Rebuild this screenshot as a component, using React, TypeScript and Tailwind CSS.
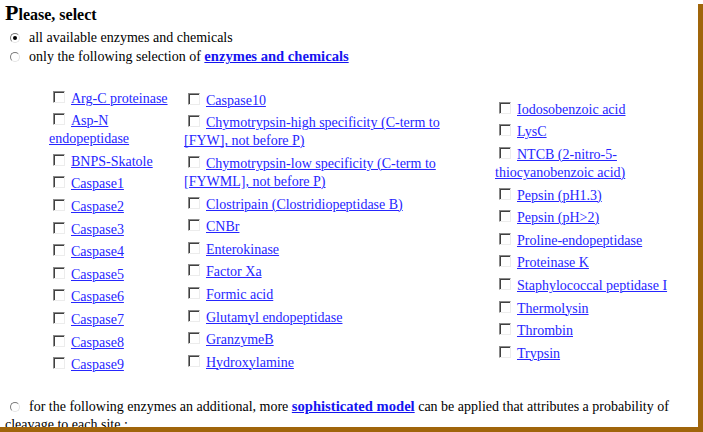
import React from "react";

const col1: string[][] = [
  ["Arg-C proteinase"],
  ["Asp-N", "endopeptidase"],
  ["BNPS-Skatole"],
  ["Caspase1"],
  ["Caspase2"],
  ["Caspase3"],
  ["Caspase4"],
  ["Caspase5"],
  ["Caspase6"],
  ["Caspase7"],
  ["Caspase8"],
  ["Caspase9"],
];
const col2: string[][] = [
  ["Caspase10"],
  ["Chymotrypsin-high specificity (C-term to", "[FYW], not before P)"],
  ["Chymotrypsin-low specificity (C-term to", "[FYWML], not before P)"],
  ["Clostripain (Clostridiopeptidase B)"],
  ["CNBr"],
  ["Enterokinase"],
  ["Factor Xa"],
  ["Formic acid"],
  ["Glutamyl endopeptidase"],
  ["GranzymeB"],
  ["Hydroxylamine"],
];
const col3: string[][] = [
  ["Iodosobenzoic acid"],
  ["LysC"],
  ["NTCB (2-nitro-5-", "thiocyanobenzoic acid)"],
  ["Pepsin (pH1.3)"],
  ["Pepsin (pH>2)"],
  ["Proline-endopeptidase"],
  ["Proteinase K"],
  ["Staphylococcal peptidase I"],
  ["Thermolysin"],
  ["Thrombin"],
  ["Trypsin"],
];

function Checkbox() {
  return (
    <span className="inline-block w-[12px] h-[12px] ml-[4px] mr-[6px] bg-white border border-t-[#8a8a8a] border-l-[#8a8a8a] border-b-[#ececec] border-r-[#ececec] shadow-[inset_1px_1px_0_#404040]" />
  );
}

function Radio({ checked }: { checked?: boolean }) {
  return (
    <span className="relative inline-block w-[10px] h-[10px] ml-[5px] mr-[9px] rounded-full bg-white border border-t-[#7a7a7a] border-l-[#7a7a7a] border-b-[#e4e4e4] border-r-[#e4e4e4] align-[-1px]">
      {checked && (
        <span className="absolute left-[2px] top-[2px] w-[4px] h-[4px] rounded-full bg-black" />
      )}
    </span>
  );
}

function Column({ items, width }: { items: string[][]; width: string }) {
  return (
    <div className={width}>
      {items.map((it, i) => (
        <div key={i} className="pt-[4.6px] leading-[18px] whitespace-nowrap">
          <Checkbox />
          <a className="text-[#2626ff] underline decoration-1" href="#">
            {it[0]}
            {it[1] && (
              <>
                <br />
                {it[1]}
              </>
            )}
          </a>
        </div>
      ))}
    </div>
  );
}

export default function App() {
  return (
    <div
      className="relative w-[703px] h-[432px] overflow-hidden bg-white text-black text-[14px]"
      style={{ fontFamily: '"Liberation Serif", "Times New Roman", serif' }}
    >
      <div className="pl-[5px] h-[28px] pt-[1px] leading-[24px] font-bold">
        <span className="text-[22px]">P</span>
        <span className="text-[16px]">lease, select</span>
      </div>
      <div className="pl-[5px] h-[19px] leading-[19px] whitespace-nowrap">
        <Radio checked />
        all available enzymes and chemicals
      </div>
      <div className="pl-[5px] h-[19px] leading-[19px] whitespace-nowrap">
        <Radio />
        only the following selection of{" "}
        <a className="font-bold text-[14.6px] text-[#1414f0] underline" href="#">
          enzymes and chemicals
        </a>
      </div>
      <div className="mt-[19px] pl-[49px] flex items-center">
        <Column items={col1} width="w-[135px]" />
        <Column items={col2} width="w-[311px]" />
        <Column items={col3} width="w-[200px]" />
      </div>
      <div className="mt-[23px] pl-[5px] leading-[18px] whitespace-nowrap">
        <Radio />
        for the following enzymes an additional, more{" "}
        <a className="font-bold text-[14.6px] text-[#1414f0] underline" href="#">
          sophisticated model
        </a>{" "}
        can be applied that attributes a probability of
        <br />
        cleavage to each site :
      </div>
      <div className="absolute right-0 top-[4px] w-[5px] h-[428px] bg-[#a0650a]" />
      <div className="absolute left-0 bottom-0 w-[703px] h-[5px] bg-[#a0650a]" />
    </div>
  );
}
